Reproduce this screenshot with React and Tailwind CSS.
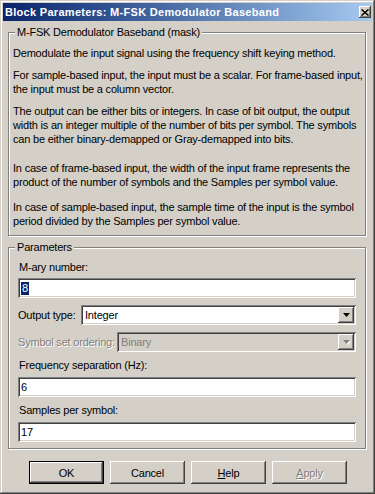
import React from "react";

const sunken =
    "shadow-[inset_1px_1px_#808080,inset_-1px_-1px_#ffffff,inset_2px_2px_#404040,inset_-2px_-2px_#d4d0c8]";
const raised =
    "shadow-[inset_-1px_-1px_#404040,inset_1px_1px_#ffffff,inset_-2px_-2px_#808080,inset_2px_2px_#d4d0c8]";

const GroupBox = ({ title, className, children }) => (
    <div
        className={`relative border border-[#808080] shadow-[1px_1px_#ffffff,inset_1px_1px_#ffffff] ${className}`}
    >
        <span className="absolute left-[6px] top-[-8px] bg-[#d4d0c8] px-[2px] leading-[14px] whitespace-nowrap">
            {title}
        </span>
        {children}
    </div>
);

const Arrow = ({ disabled }) => (
    <div className={`w-[16px] h-[16px] bg-[#d4d0c8] ${raised} flex items-center justify-center`}>
        <svg width="7" height="4" viewBox="0 0 7 4" className="overflow-visible">
            {disabled && <path d="M1 1h7L4.5 5z" fill="#ffffff" />}
            <path d="M0 0h7L3.5 4z" fill={disabled ? "#808080" : "#000000"} />
        </svg>
    </div>
);

const Field = ({ children, className = "" }) => (
    <div className={`h-[20px] bg-white ${sunken} flex items-center pl-[3px] ${className}`}>
        {children}
    </div>
);

const Button = ({ children, isDefault, disabled }) => (
    <div
        className={`w-[75px] h-[23px] flex items-center justify-center ${
            isDefault ? "border border-black" : ""
        }`}
    >
        <div className={`w-full h-full ${raised} flex items-center justify-center`}>
            <span
                className={
                    disabled
                        ? "text-[#808080] [text-shadow:1px_1px_0_#ffffff]"
                        : "text-black"
                }
            >
                {children}
            </span>
        </div>
    </div>
);

const App = () => {
    return (
        <div className="w-[375px] h-[494px] bg-[#d4d0c8] p-[3px] flex flex-col text-[11px] leading-[14px] tracking-[-0.2px] text-black font-['Liberation_Sans',Arial,sans-serif] shadow-[inset_-1px_-1px_#404040,inset_1px_1px_#d4d0c8,inset_-2px_-2px_#808080,inset_2px_2px_#ffffff] overflow-hidden">
            {/* Title bar */}
            <div className="h-[18px] flex items-center justify-between bg-gradient-to-r from-[#0a246a] to-[#a6caf0]">
                <span className="pl-[2px] text-white font-bold text-[11px] tracking-[0.3px] whitespace-nowrap">
                    Block Parameters: M-FSK Demodulator Baseband
                </span>
                <div className={`w-[12px] h-[12px] mr-[1px] bg-[#d4d0c8] ${raised} flex items-center justify-center`}>
                    <svg width="8" height="7" viewBox="0 0 8 7">
                        <path d="M0.5 0.5L7.5 6.5M7.5 0.5L0.5 6.5" stroke="#000" strokeWidth="1.5" />
                    </svg>
                </div>
            </div>

            <div className="px-[5px] flex flex-col">
                {/* Description */}
                <GroupBox title="M-FSK Demodulator Baseband (mask)" className="mt-[11px] w-[358px] h-[204px]">
                    <div className="pl-[4px] pt-[13px] whitespace-nowrap">
                        <p>Demodulate the input signal using the frequency shift keying method.</p>
                        <p className="mt-[8px]">
                            For sample-based input, the input must be a scalar. For frame-based input,
                            <br />
                            the input must be a column vector.
                        </p>
                        <p className="mt-[8px]">
                            The output can be either bits or integers. In case of bit output, the output
                            <br />
                            width is an integer multiple of the number of bits per symbol. The symbols
                            <br />
                            can be either binary-demapped or Gray-demapped into bits.
                        </p>
                        <p className="mt-[15px]">
                            In case of frame-based input, the width of the input frame represents the
                            <br />
                            product of the number of symbols and the Samples per symbol value.
                        </p>
                        <p className="mt-[11px]">
                            In case of sample-based input, the sample time of the input is the symbol
                            <br />
                            period divided by the Samples per symbol value.
                        </p>
                    </div>
                </GroupBox>

                {/* Parameters */}
                <GroupBox title="Parameters" className="mt-[11px] w-[358px] h-[202px]">
                    <div className="px-[9px] pt-[12px] flex flex-col">
                        <span className="pl-[1px]">M-ary number:</span>
                        <Field className="mt-[4px]">
                            <span className="bg-[#0a246a] text-white px-[1px] leading-[13px]">8</span>
                        </Field>

                        <div className="mt-[7px] flex items-center">
                            <span className="w-[63px] whitespace-nowrap">Output type:</span>
                            <div className={`flex-1 h-[20px] bg-white ${sunken} flex items-center justify-between p-[2px]`}>
                                <span className="pl-[2px]">Integer</span>
                                <Arrow />
                            </div>
                        </div>

                        <div className="mt-[7px] flex items-center">
                            <span className="w-[99px] whitespace-nowrap text-[#808080] [text-shadow:1px_1px_0_#ffffff]">
                                Symbol set ordering:
                            </span>
                            <div className={`flex-1 h-[20px] bg-[#d4d0c8] ${sunken} flex items-center justify-between p-[2px]`}>
                                <span className="pl-[2px] text-[#808080]">Binary</span>
                                <Arrow disabled />
                            </div>
                        </div>

                        <span className="mt-[6px] pl-[1px]">Frequency separation (Hz):</span>
                        <Field className="mt-[5px]">6</Field>

                        <span className="mt-[6px] pl-[1px]">Samples per symbol:</span>
                        <Field className="mt-[5px]">17</Field>
                    </div>
                </GroupBox>

                {/* Buttons */}
                <div className="mt-[12px] flex gap-[6px] pl-[21px]">
                    <Button isDefault>OK</Button>
                    <Button>Cancel</Button>
                    <Button>
                        <span className="underline">H</span>elp
                    </Button>
                    <Button disabled>
                        <span className="underline">A</span>pply
                    </Button>
                </div>
            </div>
        </div>
    );
};

export default App;
